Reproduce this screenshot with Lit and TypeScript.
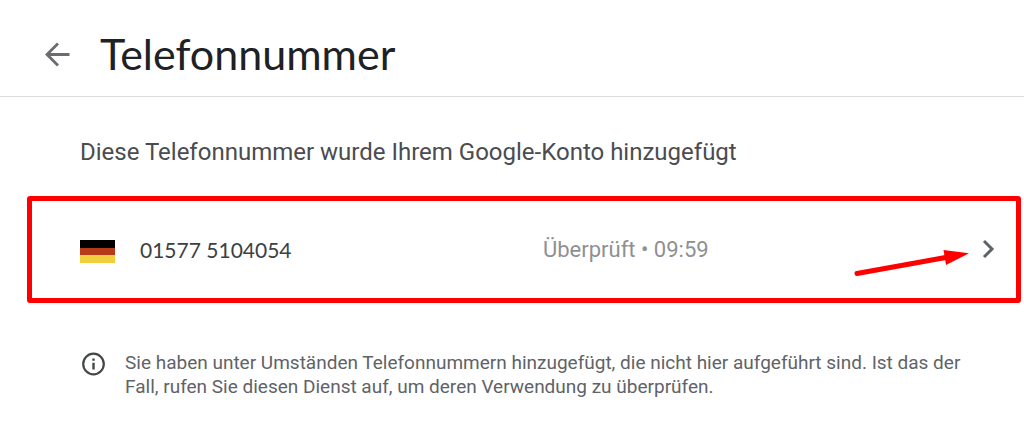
import { LitElement, html, css } from "lit";
import { customElement, property } from "lit/decorators.js";

@customElement("page-header")
class PageHeader extends LitElement {
  @property() heading = "";

  static styles = css`
    :host {
      display: block;
      border-bottom: 1px solid #dadce0;
    }
    .bar {
      display: flex;
      align-items: center;
      gap: 25px;
      height: 96px;
      padding: 0 40px;
    }
    .back {
      display: block;
      flex: none;
      margin-top: 14px;
      padding: 0;
      border: 0;
      background: none;
      cursor: pointer;
    }
    .back svg {
      display: block;
    }
    .title {
      margin: 12px 0 0;
      font: 400 43px/56px Lato, sans-serif;
      color: #202124;
    }
  `;

  render() {
    return html`
      <header class="bar">
        <button class="back" type="button" aria-label="Zurück">
          <svg width="35" height="36" viewBox="0 0 35 36" fill="none" stroke="#6a6c6f" stroke-width="2.8">
            <path d="M29.5 17.500H7.500M18 6.500L7 17.500L18 28.500" />
          </svg>
        </button>
        <h1 class="title">${this.heading}</h1>
      </header>
    `;
  }
}

@customElement("phone-row")
class PhoneRow extends LitElement {
  @property() number = "";
  @property() status = "";

  static styles = css`
    :host {
      display: block;
      position: relative;
    }
    .row {
      display: grid;
      grid-template-columns: 60px minmax(0, 1fr) minmax(0, 1fr) 54px;
      align-items: center;
      box-sizing: border-box;
      width: 100%;
      min-height: 107px;
      padding: 0 16px 0 48px;
      border: 5px solid #ff0000;
      border-radius: 3px;
      background: #fff;
      text-align: left;
      cursor: pointer;
    }
    .flag {
      display: block;
      margin-top: 4px;
    }
    .number {
      font: 400 21px/28px Lato, sans-serif;
      color: #3c4043;
    }
    .status {
      font: 400 22px/28px Roboto, sans-serif;
      color: #8e9093;
    }
    .chevron {
      display: block;
      justify-self: end;
    }
    .pointer {
      position: absolute;
      right: 52px;
      top: 47px;
      pointer-events: none;
    }
  `;

  render() {
    return html`
      <button class="row" type="button">
        <svg class="flag" width="35" height="23" viewBox="0 0 35 23">
          <path fill="#000" d="M0 0h35v8H0z" />
          <path fill="#b53a17" d="M0 8h35v7H0z" />
          <path fill="#efcf3d" d="M0 15h35v8H0z" />
        </svg>
        <span class="number">${this.number}</span>
        <span class="status">${this.status}</span>
        <svg class="chevron" width="24" height="24" viewBox="0 0 24 24" fill="none" stroke="#5f6368" stroke-width="3">
          <path d="M8 3L16 11L8 19" />
        </svg>
      </button>
      <svg class="pointer" width="116" height="36" viewBox="0 0 116 36" aria-hidden="true">
        <path d="M4 30.500L94 14.200" stroke="#ff0000" stroke-width="5" stroke-linecap="round" />
        <path d="M90.500 7L116 10.300L93 22z" fill="#ff0000" />
      </svg>
    `;
  }
}

@customElement("info-note")
class InfoNote extends LitElement {
  static styles = css`
    :host {
      display: flex;
      align-items: flex-start;
      gap: 20px;
    }
    .icon {
      flex: none;
      margin-top: 1px;
    }
    .text {
      margin: 0;
      font: 400 19px/24px Roboto, sans-serif;
      color: #5f6368;
    }
  `;

  render() {
    return html`
      <svg class="icon" width="24" height="24" viewBox="0 0 24 24" aria-hidden="true">
        <circle cx="12.500" cy="12" r="10.300" fill="none" stroke="#444648" stroke-width="2.200" />
        <path d="M11.300 6.400h2.400v2.300h-2.400zM11.300 10.700h2.400v6.900h-2.400z" fill="#444648" />
      </svg>
      <p class="text"><slot></slot></p>
    `;
  }
}

@customElement("app-root")
class AppRoot extends LitElement {
  static styles = css`
    :host {
      display: block;
      min-height: 100vh;
      background: #fff;
    }
    .intro {
      margin: 0;
      padding: 39px 80px 0;
      font: 400 24px/32px Roboto, sans-serif;
      color: #4a4c50;
    }
    .entry {
      margin: 28px 3px 0 27px;
    }
    .note {
      margin: 48px 48px 0 81px;
    }
  `;

  render() {
    return html`
      <page-header heading="Telefonnummer"></page-header>
      <main>
        <h2 class="intro">Diese Telefonnummer wurde Ihrem Google-Konto hinzugefügt</h2>
        <phone-row class="entry" number="01577 5104054" status="Überprüft • 09:59"></phone-row>
        <info-note class="note">
          Sie haben unter Umständen Telefonnummern hinzugefügt, die nicht hier aufgeführt sind. Ist das der
          Fall, rufen Sie diesen Dienst auf, um deren Verwendung zu überprüfen.
        </info-note>
      </main>
    `;
  }
}
